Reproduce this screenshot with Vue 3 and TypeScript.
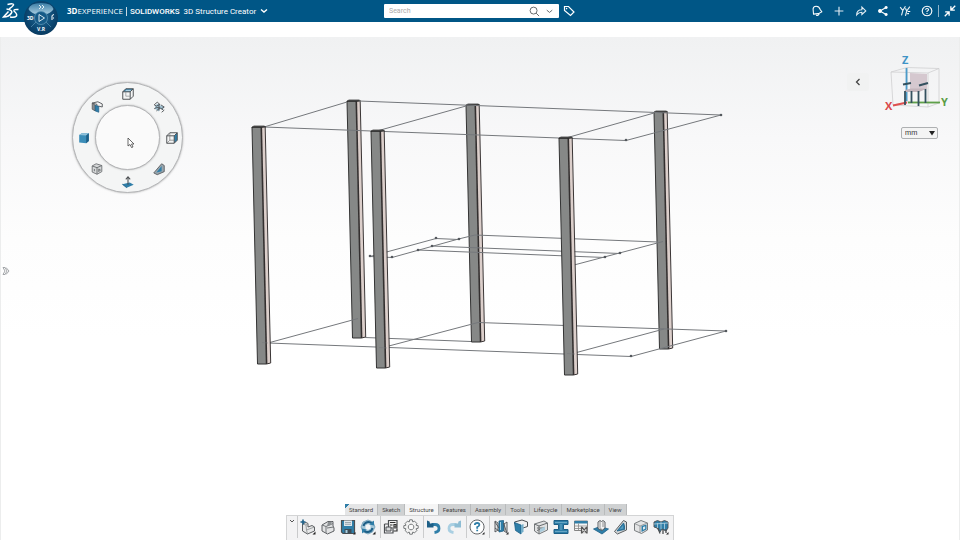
<script setup lang="ts">
import { ref } from 'vue'

interface Shape {
  d: string
  f?: string
  s?: string
  w?: number
}
interface Tool {
  name: string
  shapes: Shape[]
}
interface Post {
  x: number
  y: number
}

const BLUE = '#2f7ea8'
const DEEP = '#1d5f87'
const PALE = '#a9cfe2'
const INK = '#4c4f52'
const SOFT = '#d9dbdc'

const search = ref('')
const unit = ref('mm')
const activeTab = ref('Structure')
const tabs = ['Standard', 'Sketch', 'Structure', 'Features', 'Assembly', 'Tools', 'Lifecycle', 'Marketplace', 'View']

const headerTools: Tool[] = [
  { name: 'Notifications', shapes: [
    { d: 'M4 11.500L3.500 5.500Q4 2.500 7 2.500Q10.500 2.500 11.500 6L13.500 9L9.500 11Z', s: '#fff', w: 1.2 },
    { d: 'M7 12.500Q9.500 14 10.500 11', s: '#fff', w: 1.4 },
  ] },
  { name: 'Add', shapes: [{ d: 'M8 3V13M3 8H13', s: '#dfeaf1', w: 1.3 }] },
  { name: 'Share', shapes: [{ d: 'M3 12.500Q3 6.500 9 6.500V3.500L13.500 8L9 12V9.500Q5.500 9.500 3 12.500Z', s: '#e6eff4', w: 1.2 }] },
  { name: 'Network', shapes: [
    { d: 'M11.500 4L4.500 8L11.500 12', s: '#fff', w: 1.3 },
    { d: 'M11.500 2.200a1.800 1.800 0 1 0 .1 0ZM4.500 5.800a2.200 2.200 0 1 0 .1 0ZM11.500 10.200a1.800 1.800 0 1 0 .1 0Z', f: '#fff' },
  ] },
  { name: 'Communities', shapes: [
    { d: 'M2.500 3.500L5.500 7.500L8.500 2.500M5.500 7.500L4 13M8.500 5L10 8L13.500 3M10 8L8.500 13.500', s: '#e6eff4', w: 1.3 },
    { d: 'M10.500 11H12.500M11 8.500H14', s: '#fff', w: 1.2 },
  ] },
  { name: 'Help', shapes: [
    { d: 'M8 2.500a5.500 5.500 0 1 0 .1 0Z', s: '#fff', w: 1.2 },
    { d: 'M6.300 6.600Q6.500 5.200 8 5.200Q9.800 5.200 9.800 6.700Q9.800 7.600 8 8.300V9.200M8 10.200V11.300', s: '#fff', w: 1.2 },
  ] },
]
const collapseShapes: Shape[] = [
  { d: 'M14 2L9.500 6.500M9 2.500V7H13.500M2 14L6.500 9.500M2.500 9H7V13.500', s: '#fff', w: 1.5 },
]

const cubeWire = 'M2 5.500H10.500V14H2ZM2 5.500L5.500 2H14L10.500 5.500M14 2V10.500L10.500 14'

const ringTools: Tool[] = [
  { name: 'Top view', shapes: [{ d: 'M2 5.500L5.500 2H14L10.500 5.500Z', f: BLUE }, { d: 'M4.500 4.800L6 3H12L10.500 4.800Z', f: PALE }, { d: cubeWire, s: INK, w: 1.1 }, { d: 'M5.500 5.500V10.500H10.500', s: '#8b8f92', w: 0.8 }] },
  { name: 'Rotate view', shapes: [
    { d: 'M4 6L7 4L9 6L13 7L13 11L9 10L8 13L5 11L3 10Z', f: '#9fc0d0' },
    { d: 'M6 2.500L9 5L5 7L2.500 5.500ZM8 5V12M2.500 10Q7 6.500 13 11.500M10 5.500L14 8L11 10M5 12.500L9 9M11 14L14 11.500', s: INK, w: 1 },
  ] },
  { name: 'Right view', shapes: [{ d: 'M10.500 5.500L14 2V10.500L10.500 14Z', f: BLUE }, { d: cubeWire, s: INK, w: 1.1 }, { d: 'M5.500 2V10.500H10.500M5.500 10.500L2 14', s: '#777', w: 0.8 }] },
  { name: 'Draft', shapes: [
    { d: 'M2 12.500L11 2L14 4V11L6 14.500Z', f: '#9aa6ad' },
    { d: 'M5 12L11 4.500V10.500Z', f: BLUE },
    { d: 'M2 12.500L11 2L14 4V11L6 14.500Z', s: INK, w: 0.9 },
  ] },
  { name: 'Normal to', shapes: [
    { d: 'M1.500 10.500L10 8.500L14.500 11L6.500 14.500Z', f: BLUE },
    { d: 'M8 11V2.500M5.500 5L8 2L10.500 5', s: INK, w: 1.2 },
    { d: 'M1.500 10.500L6.500 14.500', s: DEEP, w: 1 },
  ] },
  { name: 'Hide and show', shapes: [
    { d: 'M2.500 4.500L7 2L13.500 4V11L8 14L2.500 11.500Z', f: '#d4d6d7', s: '#6b6e71', w: 1 },
    { d: 'M2.500 4.500L8 6.500V14M8 6.500L13.500 4M5 8V10.500M10 8L12 9L10 11Z', s: '#65696c', w: 1 },
  ] },
  { name: 'Shaded', shapes: [
    { d: 'M2.500 4.500L5.500 2.500H13.500V11.500L10.500 14L2.500 13Z', f: '#3b8db8' },
    { d: 'M2.500 4.500L5.500 2.500H13.500L10.500 5Z', f: '#8fc1da' },
    { d: 'M10.500 5L13.500 2.500V11.500L10.500 14Z', f: DEEP },
  ] },
  { name: 'Section view', shapes: [
    { d: 'M2.500 3.500L9 2L14 4.500V8L10 7L8 8V5Z', f: '#f4f4f4', s: INK, w: 1 },
    { d: 'M2.500 3.500L6 6V12.500L2.500 10.500Z', f: '#8a8c8e', s: INK, w: 0.8 },
    { d: 'M6 6L10 7.500V14L6 12.500Z', f: BLUE, s: DEEP, w: 0.8 },
  ] },
]

const toolGroups: Tool[][] = [
  [
    { name: 'New component', shapes: [
      { d: 'M2.500 5L6 3.500L8 4.500V8L12 6.500L14.500 8V12L7.500 15L2.500 12Z', f: '#e6e7e8', s: INK, w: 0.9 },
      { d: 'M6 6L6.500 11L14.500 8M6.500 11L7.500 15M2.500 5L6 6L8 4.500', s: '#8d9092', w: 0.8 },
      { d: 'M0.500 3H5.500M3 0.500V5.500', s: DEEP, w: 1.6 },
      { d: 'M12.500 15.500H15.500V12.500Z', f: '#222' },
    ] },
    { name: 'Open', shapes: [
      { d: 'M2 6L8 2.500H13L13 7L14 9V12L7.500 15L2 12Z', f: '#e2e3e4', s: INK, w: 0.9 },
      { d: 'M2 6L6 7.500L13 4.500M6 7.500V14M7 9L14 8', s: '#75797c', w: 1 },
      { d: 'M8 3L12 2.500L11 6L7 7Z', f: '#8c9093' },
    ] },
    { name: 'Save', shapes: [
      { d: 'M1.500 1.500H14.500V14.500H3L1.500 13Z', f: BLUE, s: INK, w: 1.2 },
      { d: 'M4 1.500H12V7H4Z', f: '#dde5ea' },
      { d: 'M4.500 10H11.500V14.500H4.500Z', f: '#3f4c55' },
      { d: 'M5.500 11H7.500V14H5.500Z', f: PALE },
      { d: 'M5 3.500H11M5 5.300H11', s: '#7c8b94', w: 0.7 },
      { d: 'M13 15.500H15.500V13Z', f: '#222' },
    ] },
    { name: 'Update', shapes: [
      { d: 'M3 3L8 1L13 3L15 8L12.500 13L8 15L3 13L1 8Z', f: '#a3c6d8', s: '#6f9cb4', w: 0.8 },
      { d: 'M3.500 7A5 5 0 0 1 12 4.500M12.500 9A5 5 0 0 1 4 11.500', s: DEEP, w: 2 },
      { d: 'M9.500 5.500L14 6.500V1.500ZM6.500 10.500L2 9.500V14.500Z', f: BLUE },
      { d: 'M8 5L10.500 6.500V9.500L8 11L5.500 9.500V6.500Z', f: '#f4f6f7' },
      { d: 'M12.500 15.500H15.500V12.500Z', f: '#222' },
    ] },
  ],
  [
    { name: 'Design tree', shapes: [
      { d: 'M5.500 1.500H14V9H5.500Z', f: '#f1f1f1', s: INK, w: 1.2 },
      { d: 'M1.500 5H5M1.500 5V14H10V9.500', s: INK, w: 1.2 },
      { d: 'M3 8H8V12H3Z', f: SOFT, s: INK, w: 1 },
      { d: 'M7 3.500H12.500M7 6H9.500M11 5.500H13V8H11ZM10.500 12H14V9.500', s: '#333', w: 1.2 },
    ] },
    { name: 'Options', shapes: [
      { d: 'M6.700 0.800H9.300L9.800 3L11.500 2.100L13.900 4.500L13 6.200L15.200 6.700V9.300L13 9.800L13.900 11.500L11.500 13.900L9.800 13L9.300 15.200H6.700L6.200 13L4.500 13.900L2.100 11.500L3 9.800L0.800 9.300V6.700L3 6.200L2.100 4.500L4.500 2.100L6.200 3Z', f: '#f2f2f2', s: '#777a7c', w: 1 },
      { d: 'M8 5.200a2.800 2.800 0 1 0 .1 0Z', f: '#fafafa', s: '#777a7c', w: 1 },
    ] },
  ],
  [
    { name: 'Undo', shapes: [
      { d: 'M5.500 5.500H9Q13 5.500 13 9.500Q13 13 8.500 13.500', s: BLUE, w: 2.8 },
      { d: 'M1 1.500L3.500 2.500L4 4.500H7.500V8.500H1Z', f: DEEP },
    ] },
    { name: 'Redo', shapes: [
      { d: 'M10.500 5.500H7Q3 5.500 3 9.500Q3 13 7.500 13.500', s: PALE, w: 2.8 },
      { d: 'M15 1.500L12.500 2.500L12 4.500H8.500V8.500H15Z', f: '#8ebdd4' },
    ] },
  ],
  [
    { name: 'Help', shapes: [
      { d: 'M8 1a7 7 0 1 0 .1 0Z', f: '#fff', s: INK, w: 0.9 },
      { d: 'M5.800 6Q6 4 8.200 4Q10.500 4 10.300 6Q10.200 7.200 8.200 8V9.700M8.200 10.700V12.300', s: BLUE, w: 1.8 },
      { d: 'M13 15.500H15.500V13Z', f: '#222' },
    ] },
  ],
  [
    { name: 'Primary member', shapes: [
      { d: 'M2 2L5 4V11L2 13ZM14 3L11 5V12L14 14Z', f: '#e4e5e6', s: INK, w: 0.9 },
      { d: 'M6 2L10.500 1.500V12L6 13Z', f: BLUE, s: DEEP, w: 0.8 },
      { d: 'M2 3L6 9M10.500 4L13.500 13M2 9L6 12', s: '#55595c', w: 1 },
      { d: 'M7.500 3V11', s: PALE, w: 1 },
      { d: 'M13 15.500H15.500V13Z', f: '#222' },
    ] },
    { name: 'Secondary member', shapes: [
      { d: 'M1.500 3L9 1L14.500 3V7.500L10 9L8 7L2 5Z', f: '#f0f0f0', s: INK, w: 1 },
      { d: 'M1.500 3.500L8 6V15L2.500 11.500Z', f: BLUE, s: DEEP, w: 0.8 },
      { d: 'M8 6L10.500 5V12.500L8 15Z', f: '#74adc9' },
    ] },
    { name: 'Trim and extend', shapes: [
      { d: 'M1.500 5L11 2L14.500 4V11L6 15L1.500 12Z', f: '#e0e1e2', s: '#686c6f', w: 0.9 },
      { d: 'M1.500 5L6 7V15M6 7L14.500 4M4 9H11M4 11.500L12 8.500', s: '#686c6f', w: 1 },
      { d: 'M7 10L12 7.500V11L7 13.500Z', f: '#a9cbdc' },
    ] },
    { name: 'Connection', shapes: [
      { d: 'M1 1.500H15V5.500H10.500V10.500H15V14.500H1V10.500H5.500V5.500H1Z', f: BLUE, s: DEEP, w: 1 },
      { d: 'M2 3.500H14M2 12.500H14M8 5V11', s: '#68a6c5', w: 1 },
    ] },
    { name: 'Cut list', shapes: [
      { d: 'M1.500 2H14.500V11.500H1.500Z', f: '#f5f5f5', s: '#777', w: 0.9 },
      { d: 'M1.500 2H14.500V4.500H1.500Z', f: BLUE },
      { d: 'M1.500 7H14.500M1.500 9.500H8M5.500 4.500V11.500', s: '#888', w: 0.8 },
      { d: 'M8 7.500H14.500V14.500H8Z', f: '#d8d8d8' },
      { d: 'M8.500 7.500V14.500M14 7.500V14.500M9 8L13.500 14M13.500 8L9 14', s: '#555', w: 1.2 },
    ] },
    { name: 'Base plate', shapes: [
      { d: 'M0.500 10L7 7.500L15.500 10L9 15Z', f: BLUE, s: DEEP, w: 0.8 },
      { d: 'M5 3L7 1.500L8.500 2.500L10 1.500L12 3V9L9 11.500L5 9.500Z', f: '#f2f2f2', s: INK, w: 0.9 },
      { d: 'M7 2V8.500L9 11M10 2.500V8', s: '#777', w: 0.8 },
    ] },
    { name: 'Gusset', shapes: [
      { d: 'M1.500 12.500L10.500 1.500L13.500 3V11L4.500 15Z', f: '#d5d8d9', s: INK, w: 0.9 },
      { d: 'M4 12L10.500 4Q12 6 11.500 10.500Z', f: BLUE, s: DEEP, w: 0.8 },
      { d: 'M6.500 10.500L10 6.500V9.500Z', f: '#5b9fc1' },
    ] },
    { name: 'End cap', shapes: [
      { d: 'M1.500 4.500L8 1.500L14.500 4V11L8.500 14.500L1.500 11.500Z', f: '#e3e4e5', s: '#6b6f72', w: 0.9 },
      { d: 'M1.500 4.500L7 7L14.500 4M7 7V14', s: '#85898b', w: 0.8 },
      { d: 'M8.500 7L13.500 5.500V10.500L8.500 13Z', f: BLUE },
      { d: 'M10 8L12.200 7.300V9.700L10 10.800Z', f: '#dceaf1' },
    ] },
    { name: 'Pattern', shapes: [
      { d: 'M1 3L4.500 1.500L8 3L11.500 1.500L15 3V9L13 12L9 10L7 13L4 9L1 8Z', f: BLUE, s: INK, w: 0.9 },
      { d: 'M4.500 4V9M8 3V10M11.500 4V10M1 5L15 4', s: '#a8c9da', w: 0.9 },
      { d: 'M5 9L7 14.500M10 10V15M13 10V14', s: INK, w: 1.3 },
      { d: 'M13 15.500H15.500V13Z', f: '#222' },
    ] },
  ],
]

const backPosts: Post[] = [{ x: 347, y: 101 }, { x: 466, y: 105 }, { x: 654, y: 112 }]
const frontPosts: Post[] = [{ x: 252, y: 127 }, { x: 371, y: 131 }, { x: 559, y: 138 }]
const nodes = [
  [721, 115], [626, 140], [370, 256], [436, 238], [459, 239], [392, 257], [432, 246],
  [418, 250], [620, 253], [605, 257], [726, 331], [631, 356],
]
</script>

<template>
  <div class="app">
    <header class="topbar">
      <div class="brand">
        <svg class="logo" viewBox="0 0 18 18" aria-hidden="true">
          <path d="M5.500 2.500Q12 1 11.500 3Q10.500 5 7 7" />
          <path d="M4.500 7Q11 8 9.500 11Q7 15 1.500 15L6.500 9.500" />
          <path d="M16.500 7.500Q11.500 7 12 9Q15.500 12 14.500 14Q12.500 16 8 15" />
        </svg>
        <button class="compass" aria-label="Compass">
          <svg viewBox="0 0 36 36">
            <defs>
              <radialGradient id="ball" cx="50%" cy="45%" r="55%">
                <stop offset="0" stop-color="#2a6f99" />
                <stop offset="0.65" stop-color="#0d4a75" />
                <stop offset="1" stop-color="#083a60" />
              </radialGradient>
              <linearGradient id="petal" x1="0" y1="0" x2="0" y2="1">
                <stop offset="0" stop-color="#3c7ea6" />
                <stop offset="1" stop-color="#a5cbdf" />
              </linearGradient>
            </defs>
            <circle cx="18" cy="18" r="17" fill="url(#ball)" />
            <path d="M5.500 9Q7 3 18 3Q29 3 30.500 9Q29 12 24 14Q18 9 12 14Q7 12 5.500 9Z" fill="url(#petal)" />
            <circle cx="18" cy="18" r="6.500" fill="#155a87" stroke="#5b95b7" stroke-width="0.8" />
            <path d="M16 14.500L21.500 18L16 21.500Z" fill="none" stroke="#d5e6ef" />
            <path d="M8 27L13 22M28 27L23 22" stroke="#5b95b7" stroke-width="0.7" />
            <path d="M16 5L18 7L16 9M19 5L21 7L19 9" fill="none" stroke="#e4f0f6" />
            <path d="M29 20V15.500L31 14.500M30 18H31" fill="none" stroke="#fff" />
            <text x="4" y="20">3D</text>
            <text x="14" y="31">V.R</text>
          </svg>
        </button>
        <h1 class="title">
          <span><b>3D</b>EXPERIENCE</span><i></i><span class="works">SOLIDWORKS</span><span class="product">3D Structure Creator</span>
        </h1>
        <button class="bare" aria-label="Switch app">
          <svg viewBox="0 0 8 8"><path d="M1 2.500L4 5L7 2.500" fill="none" stroke="#fff" stroke-width="1.400" /></svg>
        </button>
      </div>

      <form class="search" role="search" @submit.prevent>
        <input v-model="search" type="text" placeholder="Search" aria-label="Search" />
        <button type="submit" aria-label="Run search">
          <svg viewBox="0 0 12 12"><circle cx="5" cy="5" r="3.800" /><path d="M7.800 7.800L11 11" /></svg>
        </button>
        <button type="button" aria-label="Search options">
          <svg viewBox="0 0 12 12"><path d="M3 4.500L6 7L9 4.500" /></svg>
        </button>
      </form>

      <div class="actions">
        <button class="tag" aria-label="Tags">
          <svg viewBox="0 0 12 12">
            <path d="M1.500 1.500H5.500L11 7L7.500 10.500L1.500 5.500Z" fill="none" stroke="#fff" stroke-width="1.200" />
            <circle cx="3.600" cy="3.600" r="0.800" fill="#fff" />
          </svg>
        </button>
        <button v-for="tool in headerTools" :key="tool.name" class="action" :aria-label="tool.name">
          <svg viewBox="0 0 16 16">
            <path v-for="(p, i) in tool.shapes" :key="i" :d="p.d" :fill="p.f ?? 'none'" :stroke="p.s ?? 'none'" :stroke-width="p.w" />
          </svg>
        </button>
        <span class="rule"></span>
        <button class="action collapse" aria-label="Collapse">
          <svg viewBox="0 0 16 16">
            <path v-for="(p, i) in collapseShapes" :key="i" :d="p.d" :fill="p.f ?? 'none'" :stroke="p.s ?? 'none'" :stroke-width="p.w" />
          </svg>
        </button>
      </div>
    </header>

    <main class="stage">
      <svg class="scene" viewBox="0 37 960 503" role="img" aria-label="Structure model">
        <defs>
          <g id="post">
            <path d="M0 0L9 0L14.500 237H5.500Z" fill="#868887" />
            <path d="M9.500 0L13 -0.500L18.500 236L14.500 237Z" fill="#dccfcb" />
            <path d="M0 0L5.500 237H14.500" fill="none" stroke="#333" stroke-width="1" />
            <path d="M9.300 0L14.600 237" stroke="#332f2f" stroke-width="1.600" />
            <path d="M13.200 0L18.700 236L14.500 237" fill="none" stroke="#3a3535" stroke-width="1" />
            <path d="M0 0L2 -1H12.500L13.500 0L9.500 0.500H0Z" fill="#555" stroke="#222" stroke-width="0.700" />
          </g>
        </defs>
        <use v-for="p in backPosts" :key="p.x" href="#post" :x="p.x" :y="p.y" />
        <g class="wires">
          <path d="M359 101L721 115L626 140.500L264 127L347 102" />
          <path d="M377 131L466 106M566 138L654 113" />
          <path d="M458.500 239L475 235L658 242M432 246L620 253.500M417.500 250L605 257.500" />
          <path d="M392 257.500L458.500 239M574 265L663 241.500" />
          <path d="M370 256.500L436 238.500L458.500 239.500M370 256.500L392 257.500" />
          <path d="M268 343L358 318.500M268 343L631 356.500L726 331L478 322.500L385 347M365 337.500L471 341.500" />
          <path d="M571 354L664 329" />
        </g>
        <use v-for="p in frontPosts" :key="p.x" href="#post" :x="p.x" :y="p.y" />
        <g class="wires faint">
          <path d="M379 347.500L387 348M567 353.500L575 354M262 342.500L268 343" />
        </g>
        <circle v-for="(n, i) in nodes" :key="i" :cx="n[0]" :cy="n[1]" r="1.300" fill="#55595e" />
      </svg>

      <div class="overlay">
        <div class="ring" role="toolbar" aria-label="View shortcuts">
          <button v-for="(tool, i) in ringTools" :key="tool.name" :class="['ring-tool', 'spot-' + i]" :aria-label="tool.name">
            <svg viewBox="0 0 16 16">
              <path v-for="(p, k) in tool.shapes" :key="k" :d="p.d" :fill="p.f ?? 'none'" :stroke="p.s ?? 'none'" :stroke-width="p.w" />
            </svg>
          </button>
          <div class="hub">
            <svg class="pointer" viewBox="0 0 8 12"><path d="M1 1V9L3 7.500L4.500 10.500L6 10L4.500 7H7Z" fill="#fff" stroke="#444" stroke-width="0.800" /></svg>
          </div>
        </div>

        <aside class="side">
          <button class="fold" aria-label="Show panel">
            <svg viewBox="0 0 8 8"><path d="M5.500 1L2.500 4L5.500 7" fill="none" stroke="#444" stroke-width="1.300" /></svg>
          </button>
          <div class="orient">
            <svg class="triad" viewBox="0 0 70 62" role="img" aria-label="Orientation">
              <path d="M10 19L26 14.500L58 15.500L47 20ZM10 19L12 52L47 54V20M58 15.500V50L47 54M26 14.500V49L12 52M26 49L58 50" fill="none" stroke="#cfcfd1" stroke-width="0.800" />
              <path d="M25.500 15V48" stroke="#4a9bc9" stroke-width="1.800" />
              <path d="M26 49.500L12 52.500" stroke="#e0504f" stroke-width="1.800" />
              <path d="M27 49.500H59" stroke="#5fa04a" stroke-width="1.800" />
              <path d="M29 20L46 21V36L29 36Z" fill="#d5c8cf" />
              <path d="M24 37L30 35.500H46L38 39H24Z" fill="#c4b5bc" />
              <path d="M24 38V52M37.500 38V53M30.500 38V50M44.500 36V50" stroke="#34515f" stroke-width="1.800" />
              <path d="M22 31.500L30 30M38 32.500L47 30" stroke="#34515f" stroke-width="2.200" />
              <text x="21" y="11" fill="#3e93c6">Z</text>
              <text x="4" y="57" fill="#d9484a">X</text>
              <text x="60" y="53" fill="#5a9d45">Y</text>
            </svg>
            <div class="unit">
              <select v-model="unit" aria-label="Units">
                <option>mm</option>
                <option>cm</option>
                <option>in</option>
              </select>
              <svg viewBox="0 0 6 6"><path d="M0 1H6L3 5.500Z" fill="#222" /></svg>
            </div>
          </div>
        </aside>
      </div>

      <button class="drawer" aria-label="Open tree">
        <svg viewBox="0 0 8 10"><path d="M1 1.500H3L5 5L3 8.500H1L3 5ZM4 1.500L7 5L4 8.500" fill="none" stroke="#9a9da0" stroke-width="0.900" /></svg>
      </button>

      <footer class="dock">
        <nav class="tabs" aria-label="Command sections">
          <button v-for="tab in tabs" :key="tab" :class="{ on: tab === activeTab, pinned: tab === 'Standard' }" @click="activeTab = tab">{{ tab }}</button>
        </nav>
        <div class="commands" role="toolbar" aria-label="Commands">
          <button class="more" aria-label="Collapse toolbar">
            <svg viewBox="0 0 6 6"><path d="M1 2L3 4L5 2" fill="none" stroke="#555" /></svg>
          </button>
          <div v-for="(group, g) in toolGroups" :key="g" class="group">
            <button v-for="tool in group" :key="tool.name" class="tool" :aria-label="tool.name">
              <svg viewBox="0 0 16 16">
                <path v-for="(p, i) in tool.shapes" :key="i" :d="p.d" :fill="p.f ?? 'none'" :stroke="p.s ?? 'none'" :stroke-width="p.w" />
              </svg>
            </button>
          </div>
        </div>
      </footer>
    </main>
  </div>
</template>

<style>
body {
  background: #fff;
}
</style>

<style scoped>
.app {
  display: flex;
  flex-direction: column;
  min-height: 100vh;
  font-family: 'Open Sans', 'Noto Sans', sans-serif;
  color: #333;
}
button {
  padding: 0;
  border: 0;
  background: none;
  font: inherit;
  color: inherit;
  cursor: pointer;
}
svg {
  display: block;
}
.topbar {
  position: relative;
  z-index: 2;
  display: grid;
  grid-template-columns: 40% minmax(120px, 175px) 1fr;
  align-items: center;
  height: 22px;
  background: #005686;
  color: #fff;
}
.brand {
  display: flex;
  align-items: center;
  padding-left: 2px;
}
.logo {
  width: 18px;
  height: 18px;
  fill: none;
  stroke: #fff;
  stroke-width: 1.5;
}
.compass {
  position: absolute;
  left: 23px;
  top: 0;
}
.compass svg {
  width: 36px;
  height: 36px;
}
.compass text {
  font-size: 5px;
  font-weight: 700;
  fill: #fff;
}
.title {
  display: flex;
  align-items: center;
  margin: 0 0 0 47px;
  font-size: 8px;
  line-height: 12px;
  font-weight: 400;
  white-space: nowrap;
}
.title i {
  width: 1px;
  height: 9px;
  margin: 0 3px;
  background: #c6d9e4;
}
.works,
.product {
  padding-top: 1px;
  font-family: Roboto, sans-serif;
}
.works {
  font-weight: 500;
}
.product {
  margin-left: 4px;
}
.bare {
  margin-left: 4px;
}
.bare svg {
  width: 8px;
  height: 8px;
}
.search {
  display: flex;
  align-items: center;
  height: 14px;
  border-radius: 1px;
  background: #fff;
}
.search input {
  flex: 1;
  min-width: 0;
  height: 14px;
  padding: 0 5px;
  border: 0;
  outline: 0;
  background: none;
  font: 7px/12px Roboto, sans-serif;
}
.search input::placeholder {
  color: #aaa;
}
.search button {
  margin-right: 4px;
}
.search svg {
  width: 11px;
  height: 11px;
  fill: none;
  stroke: #5c6063;
}
.actions {
  display: flex;
  align-items: center;
}
.tag {
  margin: 0 auto 0 4px;
}
.tag svg {
  width: 12px;
  height: 12px;
}
.action {
  display: flex;
  justify-content: center;
  width: 22px;
}
.action svg {
  width: 14px;
  height: 14px;
}
.rule {
  width: 1px;
  height: 12px;
  background: #8fb3c9;
}
.collapse {
  width: 21px;
}
.stage {
  position: relative;
  flex: 1;
  display: flex;
  flex-direction: column;
  justify-content: space-between;
  margin-top: 15px;
  border-left: 1px solid #eceded;
  border-right: 1px solid #eceded;
  background: linear-gradient(#f0f1f2, #f8f8f9 20%, #fdfdfd 40%, #fff 60%);
}
.scene {
  position: absolute;
  left: -1px;
  top: 0;
  width: calc(100% + 2px);
  height: 100%;
}
.wires {
  fill: none;
  stroke: #75787c;
  stroke-width: 1;
}
.faint {
  opacity: 0.5;
}
.overlay {
  position: relative;
  display: flex;
  justify-content: space-between;
  padding: 16px 8px 0 71px;
}
.ring {
  position: relative;
  display: grid;
  place-items: center;
  box-sizing: border-box;
  width: 111px;
  height: 111px;
  margin-top: 29px;
  border: 1px solid #b4b5b7;
  border-radius: 50%;
  background: #f4f5f5;
  box-shadow: 0 0 2px #aaa;
}
.hub {
  display: grid;
  place-items: center;
  box-sizing: border-box;
  width: 65px;
  height: 65px;
  border: 1px solid #b4b5b7;
  border-radius: 50%;
  background: #fafafa;
  box-shadow: 0 0 2px #aaa;
}
.pointer {
  width: 8px;
  height: 12px;
  margin: 10px 0 0 6px;
}
.ring-tool {
  position: absolute;
  left: 48px;
  top: 48px;
}
.ring-tool svg {
  width: 14px;
  height: 14px;
}
.spot-0 {
  top: 4px;
}
.spot-1 {
  left: 79px;
  top: 17px;
}
.spot-2 {
  left: 92px;
}
.spot-3 {
  left: 79px;
  top: 79px;
}
.spot-4 {
  top: 92px;
}
.spot-5 {
  left: 17px;
  top: 79px;
}
.spot-6 {
  left: 4px;
}
.spot-7 {
  left: 17px;
  top: 17px;
}
.side {
  display: flex;
  align-items: flex-start;
  gap: 12px;
}
.fold {
  display: grid;
  place-items: center;
  width: 22px;
  height: 18px;
  margin-top: 20px;
  border-radius: 2px;
  background: #f1f2f2;
}
.fold svg {
  width: 8px;
  height: 8px;
}
.orient {
  display: flex;
  flex-direction: column;
  align-items: flex-end;
  gap: 12px;
}
.triad {
  width: 70px;
  height: 62px;
  overflow: visible;
}
.triad text {
  font-size: 11px;
  font-weight: 700;
}
.unit {
  position: relative;
  width: 37px;
  margin-right: 13px;
}
.unit select {
  display: block;
  box-sizing: border-box;
  width: 100%;
  height: 12px;
  padding: 0 3px;
  border: 1px solid #aeb0b2;
  border-radius: 2px;
  appearance: none;
  background: #f4f4f4;
  color: #333;
  font: 7px/10px Roboto, sans-serif;
}
.unit svg {
  position: absolute;
  right: 3px;
  top: 3px;
  width: 6px;
  height: 6px;
  pointer-events: none;
}
.drawer {
  position: absolute;
  left: 1px;
  top: 229px;
}
.drawer svg {
  width: 8px;
  height: 10px;
}
.dock {
  position: relative;
  align-self: center;
}
.tabs {
  display: flex;
  margin-left: 59px;
}
.tabs button {
  height: 11px;
  padding: 1px 4px 0;
  border-right: 1px solid #b9bbbc;
  background: #cfd1d2;
  color: #444;
  font: 6px/10px Roboto, sans-serif;
}
.tabs .on {
  background: #f5f5f5;
}
.tabs .pinned {
  background: linear-gradient(135deg, #2f7ea8 3px, #e4e5e6 3px);
}
.commands {
  display: flex;
  height: 22px;
  padding-bottom: 2px;
  border: 1px solid #d3d4d5;
  border-bottom: 0;
  background: #f3f3f4;
}
.more {
  display: flex;
  justify-content: center;
  width: 11px;
  padding-top: 2px;
  border-right: 1px solid #c9cacb;
}
.more svg {
  width: 6px;
  height: 6px;
}
.group {
  display: flex;
  align-items: center;
}
.group + .group {
  margin-left: 2px;
  border-left: 1px solid #cbcccd;
}
.group:last-child {
  padding: 0 2px 0 1px;
}
.tool {
  display: flex;
  justify-content: center;
  width: 20px;
}
.tool svg {
  width: 16px;
  height: 16px;
}
</style>
